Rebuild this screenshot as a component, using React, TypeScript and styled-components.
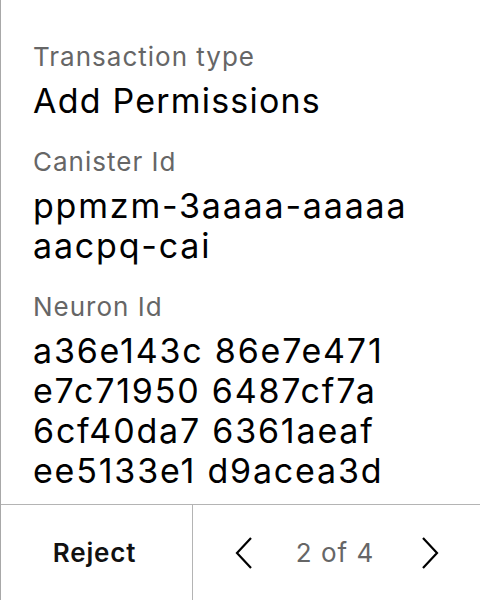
import React from "react";
import styled, { createGlobalStyle } from "styled-components";

const GlobalStyle = createGlobalStyle`
  html, body {
    margin: 0;
    padding: 0;
    background: #ffffff;
  }
  body {
    font-family: Inter, "Noto Sans", sans-serif;
  }
`;

const Screen = styled.div`
  display: flex;
  flex-direction: column;
  width: 480px;
  height: 600px;
  box-sizing: border-box;
  border-left: 1px solid #a8a8a8;
  background: #ffffff;
`;

const Content = styled.div`
  flex: 1;
  display: flex;
  flex-direction: column;
  gap: 25px;
  padding: 41px 16px 0 32px;
`;

const Field = styled.div`
  display: flex;
  flex-direction: column;
  gap: 8px;
`;

const Label = styled.div`
  font-size: 26px;
  line-height: 32px;
  letter-spacing: 1px;
  color: #666666;
`;

// ids get a bit more tracking than plain words
const Value = styled.div<{ $id?: boolean }>`
  font-size: 34px;
  line-height: 40px;
  letter-spacing: ${(p) => (p.$id ? "1.8px" : "1.2px")};
  color: #000000;
`;

const Footer = styled.div`
  display: flex;
  height: 96px;
  border-top: 1px solid #b4b4b4;
  box-sizing: border-box;
  margin-top: auto;
`;

const RejectButton = styled.button`
  width: 192px;
  border: none;
  border-right: 1px solid #b4b4b4;
  background: none;
  font-family: Inter, sans-serif;
  font-size: 26px;
  font-weight: 600;
  letter-spacing: 0.8px;
  color: #111111;
  padding: 0 4px 0 0;
`;

const Pager = styled.div`
  flex: 1;
  display: flex;
  align-items: center;
  justify-content: space-between;
  padding: 0 41px 0 42px;
`;

const PageText = styled.span`
  font-size: 26px;
  letter-spacing: 1px;
  color: #666666;
  margin-right: 4px;
`;

const Arrow = styled.button`
  display: flex;
  border: none;
  background: none;
  padding: 0;
`;

function Chevron({ dir }: { dir: "left" | "right" }) {
  return (
    <svg width="18" height="32" viewBox="0 0 18 32">
      <path
        d={dir === "left" ? "M16 1 L2 16 L16 31" : "M2 1 L16 16 L2 31"}
        fill="none"
        stroke="#000"
        strokeWidth="2.2"
      />
    </svg>
  );
}

export default function App() {
  return (
    <>
      <GlobalStyle />
      <Screen>
        <Content>
          <Field>
            <Label>Transaction type</Label>
            <Value>Add Permissions</Value>
          </Field>
          <Field>
            <Label>Canister Id</Label>
            <Value $id>
              ppmzm-3aaaa-aaaaa
              <br />
              aacpq-cai
            </Value>
          </Field>
          <Field>
            <Label>Neuron Id</Label>
            <Value $id>
              a36e143c 86e7e471
              <br />
              e7c71950 6487cf7a
              <br />
              6cf40da7 6361aeaf
              <br />
              ee5133e1 d9acea3d
            </Value>
          </Field>
        </Content>
        <Footer>
          <RejectButton>Reject</RejectButton>
          <Pager>
            <Arrow>
              <Chevron dir="left" />
            </Arrow>
            <PageText>2 of 4</PageText>
            <Arrow>
              <Chevron dir="right" />
            </Arrow>
          </Pager>
        </Footer>
      </Screen>
    </>
  );
}
